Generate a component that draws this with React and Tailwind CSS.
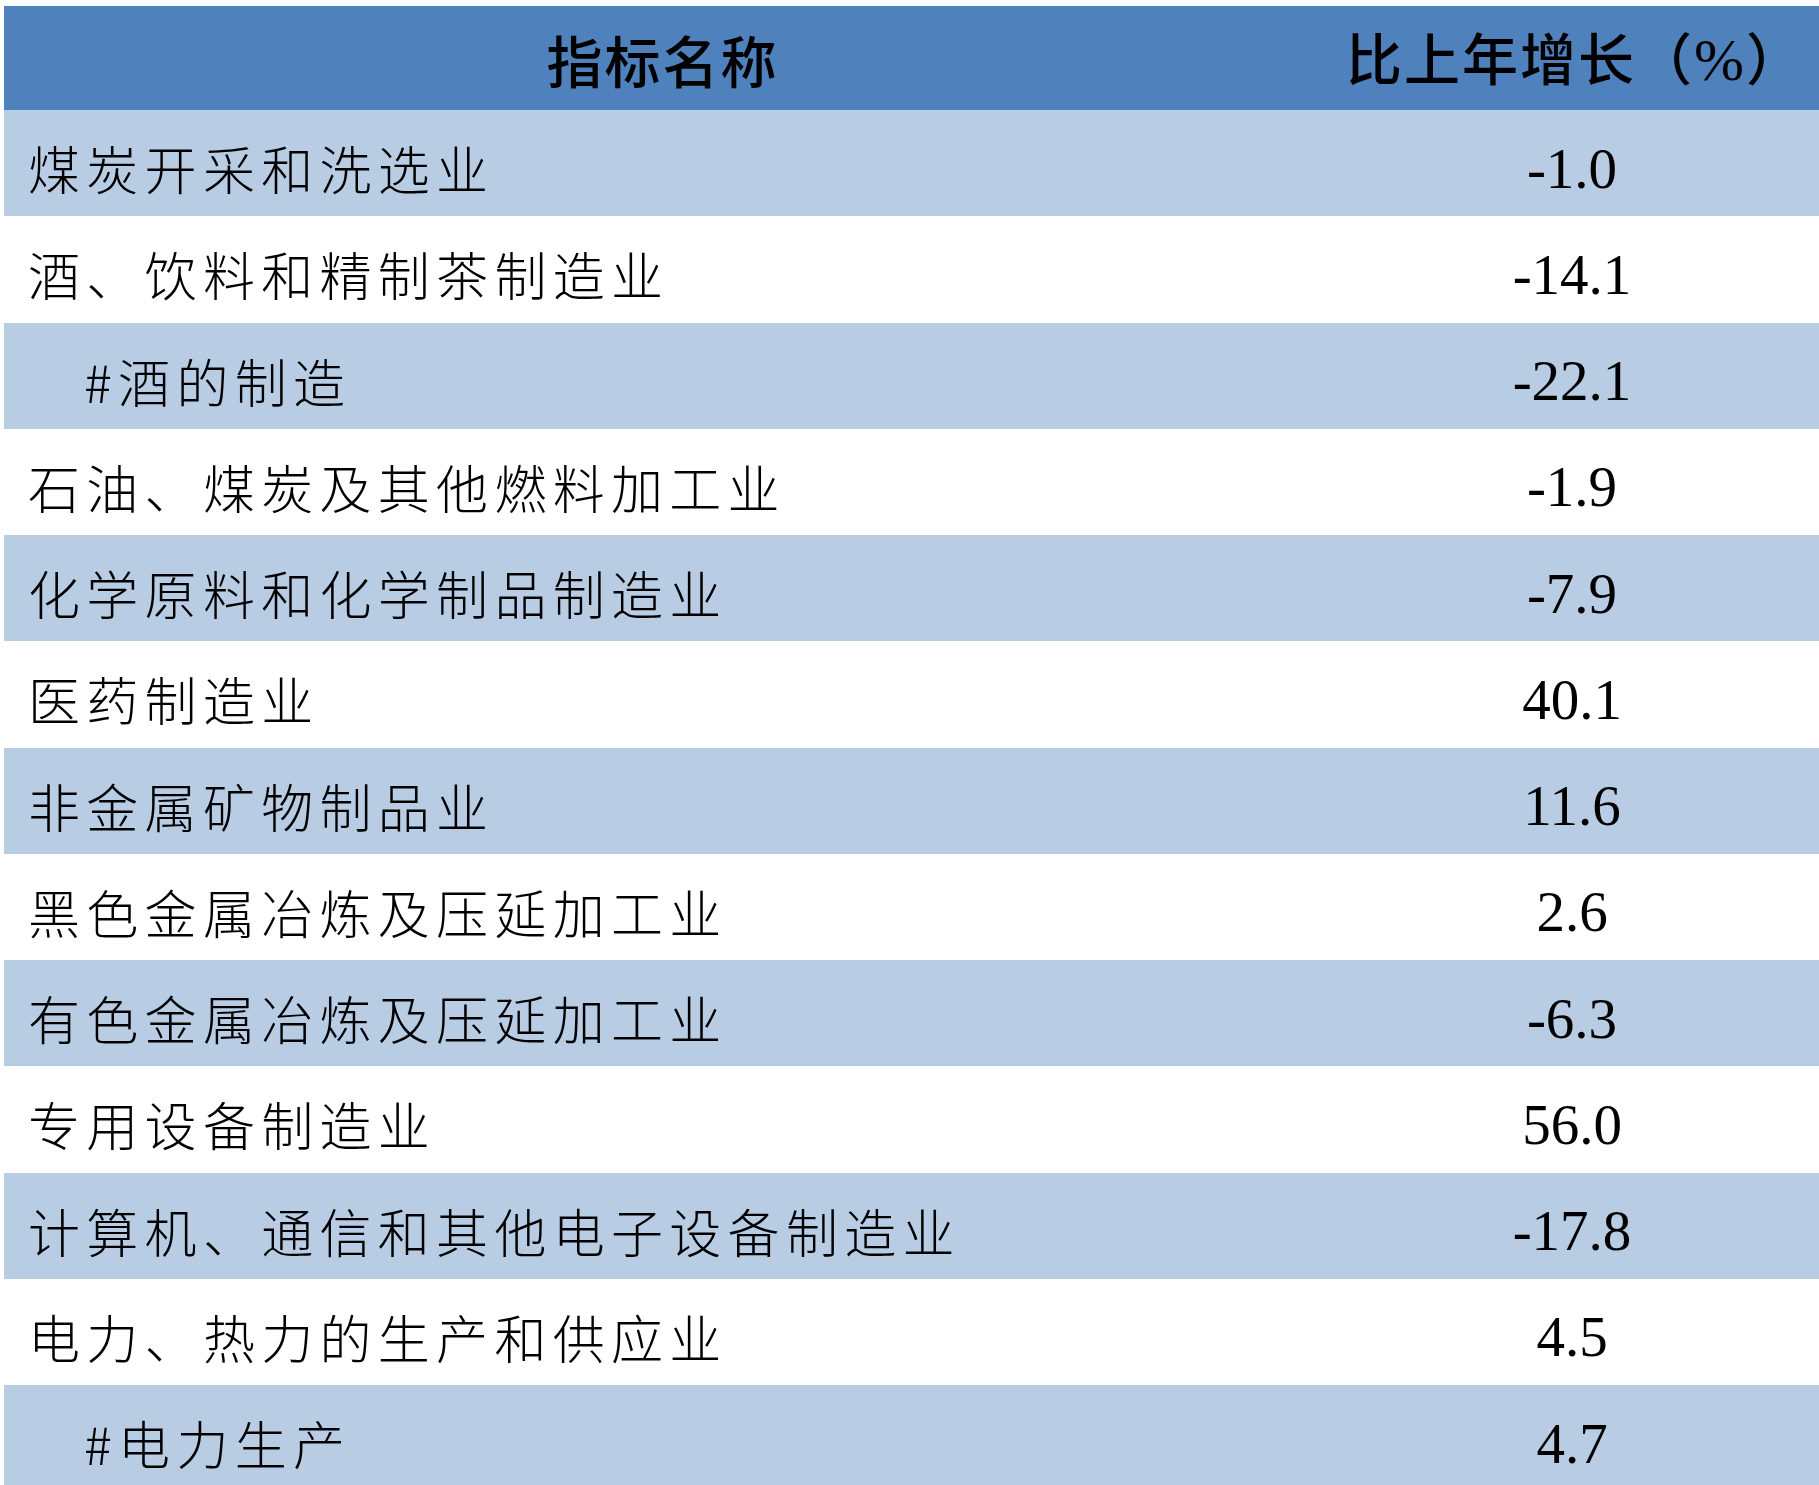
import React from 'react';

const rows = [
  { name: '煤炭开采和洗选业', value: '-1.0' },
  { name: '酒、饮料和精制茶制造业', value: '-14.1' },
  { name: '#酒的制造', value: '-22.1', sub: true },
  { name: '石油、煤炭及其他燃料加工业', value: '-1.9' },
  { name: '化学原料和化学制品制造业', value: '-7.9' },
  { name: '医药制造业', value: '40.1' },
  { name: '非金属矿物制品业', value: '11.6' },
  { name: '黑色金属冶炼及压延加工业', value: '2.6' },
  { name: '有色金属冶炼及压延加工业', value: '-6.3' },
  { name: '专用设备制造业', value: '56.0' },
  { name: '计算机、通信和其他电子设备制造业', value: '-17.8' },
  { name: '电力、热力的生产和供应业', value: '4.5' },
  { name: '#电力生产', value: '4.7', sub: true },
];

const cjk = { fontFamily: '"Noto Sans CJK SC", "Noto Sans", sans-serif' };
const serif = { fontFamily: '"Liberation Serif", "Noto Sans CJK SC", serif' };

const App = () => {
  return (
    <div className="min-h-screen bg-white pt-[6px] pl-[4px] overflow-hidden">
      <div className="w-[1815px]">
        {/* Header */}
        <div className="grid grid-cols-[1313px_1fr] h-[104px] bg-[#4f81bd] text-black">
          <div className="flex items-center justify-center pl-[4px] pt-[2px]">
            <span className="text-[56px] font-medium tracking-[2px] leading-none" style={cjk}>指标名称</span>
          </div>
          <div className="flex items-center justify-center pt-[2px] pl-[14px]">
            <span className="text-[56px] font-medium tracking-[2px] leading-none" style={cjk}>
              比上年增长（<span className="font-normal text-[60px]" style={serif}>%</span>）
            </span>
          </div>
        </div>

        {/* Body */}
        {rows.map((row, index) => (
          <div
            key={index}
            className={`grid grid-cols-[1313px_1fr] h-[106.25px] ${index % 2 === 0 ? 'bg-[#b8cce4]' : 'bg-white'}`}
          >
            <div className={`flex items-center pt-[10px] ${row.sub ? 'pl-[80px]' : 'pl-[24px]'}`}>
              <span className="text-[52px] font-light tracking-[6.3px] leading-none text-black" style={cjk}>
                {row.name}
              </span>
            </div>
            <div className="flex items-center justify-center pt-[10px] pl-[8px]">
              <span className="text-[57px] leading-none text-black" style={serif}>{row.value}</span>
            </div>
          </div>
        ))}
      </div>
    </div>
  );
};

export default App;
